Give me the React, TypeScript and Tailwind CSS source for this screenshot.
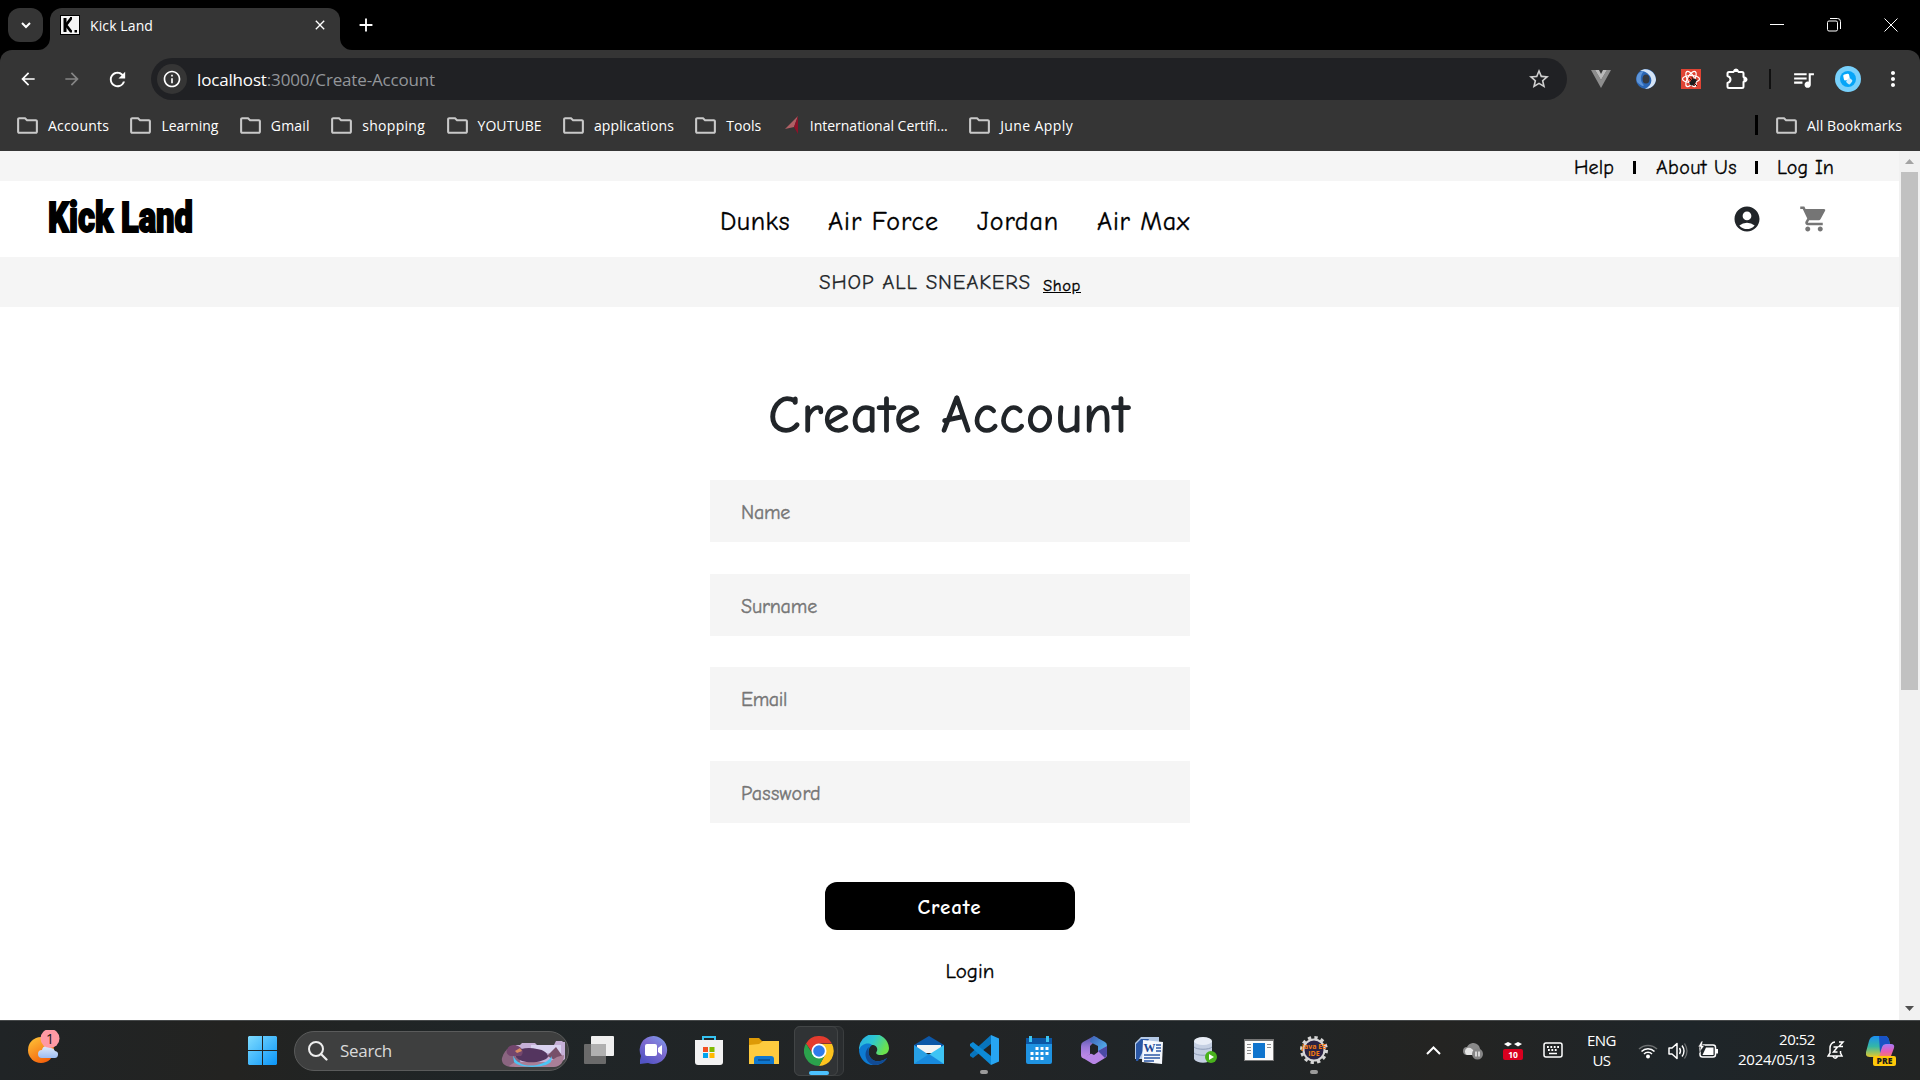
import { useLayoutEffect, useRef, type ReactNode } from "react";
import {
  MdAccountCircle,
  MdArrowBack,
  MdArrowForward,
  MdClose,
  MdAdd,
  MdMoreVert,
  MdOutlineFolder,
  MdOutlineInfo,
  MdQueueMusic,
  MdRefresh,
  MdShoppingCart,
  MdStarBorder,
} from "react-icons/md";

/* Spreads its text over the width set by the class, by tracking or by horizontal scaling. */
function Label({
  className = "",
  scale = false,
  underline = false,
  children,
}: {
  className?: string;
  scale?: boolean;
  underline?: boolean;
  children: ReactNode;
}) {
  const box = useRef<HTMLSpanElement>(null);
  const text = useRef<HTMLSpanElement>(null);
  useLayoutEffect(() => {
    const b = box.current;
    const t = text.current;
    if (!b || !t) return;
    const target = b.clientWidth;
    const natural = t.getBoundingClientRect().width;
    if (scale) {
      t.style.transform = `scaleX(${target / natural})`;
    } else {
      t.style.letterSpacing = `${(target - natural) / (t.textContent?.length || 1)}px`;
    }
  }, [scale]);
  return (
    <span ref={box} className={`block shrink-0 whitespace-nowrap ${className}`}>
      <span ref={text} className={underline ? "inline-block origin-left underline" : "inline-block origin-left"}>
        {children}
      </span>
    </span>
  );
}

function Ico({ className, box, children }: { className: string; box: string; children: ReactNode }) {
  return (
    <svg className={`shrink-0 ${className}`} viewBox={box} fill="none">
      {children}
    </svg>
  );
}

function TabStrip() {
  return (
    <div className="flex h-[50px] items-end bg-black">
      <div className="mb-2 ml-2 flex h-[34px] w-[35px] items-center justify-center rounded-xl bg-[#353535]">
        <Ico className="h-3 w-3" box="0 0 12 12">
          <path d="M2 4l4 4 4-4" stroke="#fff" strokeWidth="2" />
        </Ico>
      </div>
      <svg className="-ml-[5px] h-3 w-3" viewBox="0 0 12 12">
        <path d="M12 0V12H0A12 12 0 0 0 12 0Z" fill="#353535" />
      </svg>
      <div className="flex h-[42px] w-[290px] items-center rounded-t-xl bg-[#353535] pb-2 pl-[10px] pr-3">
        <Ico className="h-5 w-5" box="0 0 20 20">
          <path d="M0 0h20v20H0z" fill="#000" />
          <path d="M1 1h18v18H1z" fill="#f4f4f4" />
          <path d="M5 3v14" stroke="#000" strokeWidth="3" />
          <path d="M11 3.500L6 10L11 16.500" stroke="#000" strokeWidth="2.800" />
          <path d="M14.500 15h2.500v2.500h-2.500zM10 2h2v2h-2zM10 15.500h2v2h-2z" fill="#000" />
        </Ico>
        <Label className="ml-[10px] w-[63px] text-[14px] text-white">Kick Land</Label>
        <MdClose className="ml-auto h-4 w-4 text-white" />
      </div>
      <svg className="h-3 w-3" viewBox="0 0 12 12">
        <path d="M0 0V12H12A12 12 0 0 1 0 0Z" fill="#353535" />
      </svg>
      <MdAdd className="mb-[14px] ml-[3px] h-[22px] w-[22px] text-white" />
      <div className="mb-[18px] ml-auto mr-[22px] flex items-center gap-[43px]">
        <Ico className="h-[14px] w-[14px]" box="0 0 14 14">
          <path d="M0 6.500h14" stroke="#fff" />
        </Ico>
        <Ico className="h-[14px] w-[14px]" box="0 0 14 14">
          <rect x=".5" y="3" width="10" height="10" rx="1.500" stroke="#fff" />
          <path d="M3 .5h7.500a3 3 0 0 1 3 3v7.500" stroke="#fff" />
        </Ico>
        <Ico className="h-[14px] w-[14px]" box="0 0 14 14">
          <path d="M.5.5l13 13M13.500.5l-13 13" stroke="#fff" />
        </Ico>
      </div>
    </div>
  );
}

function Toolbar() {
  return (
    <div className="flex h-[58px] items-center rounded-t-xl bg-[#353535] pl-[18px] pr-[15px]">
      <MdArrowBack className="h-5 w-5 text-white" />
      <MdArrowForward className="ml-6 h-5 w-5 text-[#858585]" />
      <MdRefresh className="ml-6 h-[23px] w-[23px] text-white" />
      <div className="ml-[22px] flex h-[42px] w-[1416px] shrink-0 items-center rounded-full bg-[#202124] pl-[6px] pr-4">
        <div className="flex h-[30px] w-[30px] items-center justify-center rounded-full bg-[#353535]">
          <MdOutlineInfo className="h-5 w-5 text-white" />
        </div>
        <Label className="ml-[10px] mt-px w-[238px] text-[17px] text-[#93969a]">
          <span className="text-white">localhost</span>:3000/Create-Account
        </Label>
        <MdStarBorder className="ml-auto h-6 w-6 text-[#cfcfcf]" />
      </div>
      <Ico className="ml-[24px] h-5 w-5" box="0 0 20 20">
        <path d="M0 1h4l6 10 6-10h4L10 19z" fill="#8d8d8d" />
        <path d="M4 1h4l2 4 2-4h4l-6 10z" fill="#bababa" />
      </Ico>
      <Ico className="ml-[25px] h-5 w-5" box="0 0 20 20">
        <circle cx="10" cy="10" r="10" fill="#2a66b5" />
        <path d="M4 2C12-3 20 4 20 11C19 17 14 20 9 20C15 17 17 12 14 7C11 3 8 2 4 2Z" fill="#d5e4f6" />
        <path d="M1 13C-1 7 3 2 8 2C4 6 4 12 7 15C9 18 6 18 1 13Z" fill="#5d94d8" />
        <ellipse cx="10" cy="10" rx="3.500" ry="4.500" fill="#353a41" />
      </Ico>
      <Ico className="ml-[25px] h-5 w-5" box="0 0 20 20">
        <path d="M0 0h20v20H0z" fill="#e04434" />
        <g stroke="#fff" strokeWidth="1.200">
          <ellipse cx="10" cy="10" rx="8.500" ry="3.500" />
          <ellipse cx="10" cy="10" rx="8.500" ry="3.500" transform="rotate(60 10 10)" />
          <ellipse cx="10" cy="10" rx="8.500" ry="3.500" transform="rotate(120 10 10)" />
        </g>
        <ellipse cx="12" cy="13" rx="2.500" ry="4" fill="#1b1b1b" transform="rotate(40 12 13)" />
        <path d="M8 9l8 8M8 14l8-3M11 8l2 9" stroke="#1b1b1b" />
      </Ico>
      <Ico className="ml-[25px] h-[22px] w-[22px]" box="0 0 22 22">
        <path
          d="M3 4h4.500q1-2.500 2.500-2.500T12.500 4H16q1.500 0 1.500 1.500V9q3 1 3 2.500t-3 2.500v4.500q0 1.500-1.500 1.500H3q-1.500 0-1.500-1.500V15q3-1 3-3.500T1.500 8V5.500Q1.500 4 3 4z"
          stroke="#fff"
          strokeWidth="2"
          strokeLinejoin="round"
        />
        <path d="M7.500 4q1-2.500 2.500-2.500T12.500 4zM17.500 9q3 1 3 2.500t-3 2.500z" fill="#fff" />
      </Ico>
      <div className="ml-[21px] h-5 w-[2px] bg-[#101010]" />
      <MdQueueMusic className="ml-[20px] h-[25px] w-[25px] text-white" />
      <Ico className="ml-[19px] h-[26px] w-[26px]" box="0 0 26 26">
        <circle cx="13" cy="13" r="13" fill="#78d1fc" />
        <circle cx="13" cy="13" r="8" fill="#05a5f8" />
        <rect x="8.500" y="8" width="6" height="6" rx="1.500" fill="#fff" transform="rotate(-12 12 11)" />
        <rect x="12.500" y="12" width="5" height="5.500" rx="1.500" fill="#c9eafc" transform="rotate(40 14 14)" />
      </Ico>
      <MdMoreVert className="ml-5 h-6 w-6 text-white" />
    </div>
  );
}

const bookmarks = [
  { name: "Accounts", cls: "w-[61px]" },
  { name: "Learning", cls: "w-[57px]" },
  { name: "Gmail", cls: "w-[39px]" },
  { name: "shopping", cls: "w-[63px]" },
  { name: "YOUTUBE", cls: "w-[64px]" },
  { name: "applications", cls: "w-[80px]" },
  { name: "Tools", cls: "w-[35px]" },
  { name: "International Certifi...", cls: "w-[138px]" },
  { name: "June Apply", cls: "w-[73px]" },
];

function BookmarksBar() {
  return (
    <div className="flex h-[43px] items-center gap-[19.400px] bg-[#353535] pb-[9px] pl-[15px] pr-[18px] text-[14px] text-white">
      {bookmarks.map((b) => (
        <div key={b.name} className="flex items-center">
          {b.name.startsWith("Inter") ? (
            <Ico className="mr-1 h-5 w-[25px]" box="0 0 25 20">
              <path d="M17 1L4 14l9-2z" fill="#b06065" />
              <path d="M17 1v18l-4-7z" fill="#8e1128" />
            </Ico>
          ) : (
            <MdOutlineFolder className="mr-2 h-[25px] w-[25px] text-[#c9c9c9]" />
          )}
          <Label className={b.cls}>{b.name}</Label>
        </div>
      ))}
      <div className="ml-auto h-5 w-[3px] bg-black" />
      <div className="-ml-[3px] flex items-center">
        <MdOutlineFolder className="mr-2 h-[25px] w-[25px] text-[#c9c9c9]" />
        <Label className="w-[95px]">All Bookmarks</Label>
      </div>
    </div>
  );
}

function ShopHeader() {
  return (
    <header>
      <div className="flex h-[30px] items-center justify-end bg-[#f5f5f5] pr-[65px] pt-[3px] text-[20px] text-black [-webkit-text-stroke:0.3px_#000]">
        <Label className="w-[40px]">Help</Label>
        <div className="ml-[19px] h-[13px] w-[3px] bg-black" />
        <Label className="ml-[20px] w-[81px]">About Us</Label>
        <div className="ml-[18px] h-[13px] w-[3px] bg-black" />
        <Label className="ml-[19px] w-[57px]">Log In</Label>
      </div>
      <div className="grid h-[76px] grid-cols-[720px_1fr_165px] items-center text-black">
        <Label
          scale
          className="ml-[48px] w-[145px] pb-[3px] font-['Impact','Roboto',sans-serif] text-[42px] leading-none font-black [-webkit-text-stroke:1.800px_#000]"
        >
          Kick Land
        </Label>
        <nav className="flex pt-[7px] text-[26px] [-webkit-text-stroke:0.350px_#000]">
          <Label className="w-[70px]">Dunks</Label>
          <Label className="ml-[38px] w-[111px]">Air Force</Label>
          <Label className="ml-[38px] w-[82px]">Jordan</Label>
          <Label className="ml-[38px] w-[93px]">Air Max</Label>
        </nav>
        <div className="flex gap-[37px]">
          <MdAccountCircle className="-ml-[2px] h-[30px] w-[30px] text-[#212529]" />
          <MdShoppingCart className="h-[30px] w-[30px] text-[#757575]" />
        </div>
      </div>
      <div className="flex h-[50px] items-center bg-[#f5f5f5] pl-[819px] text-[#212529]">
        <Label className="mt-[2px] w-[212px] text-[21px] [-webkit-text-stroke:0.250px_#212529]">SHOP ALL SNEAKERS</Label>
        <a className="ml-[12px] mt-[8px] text-[16.500px] text-black [-webkit-text-stroke:0.350px_#000]">
          <Label underline className="w-[38px]">
            Shop
          </Label>
        </a>
      </div>
    </header>
  );
}

const fields = [
  { name: "Name", cls: "w-[49px]" },
  { name: "Surname", cls: "w-[76px]" },
  { name: "Email", cls: "w-[46px]" },
  { name: "Password", cls: "w-[80px]" },
];

function AccountForm() {
  return (
    <form className="flex flex-col items-center">
      <h1 className="mt-[73px] h-[100px] text-[52px] leading-[70px] font-medium text-[#212529] [-webkit-text-stroke:1.500px_#212529]">
        <Label className="w-[362px]">Create Account</Label>
      </h1>
      <div className="flex flex-col gap-[31.250px]">
        {fields.map((f) => (
          <div
            key={f.name}
            className="flex h-[62.400px] w-[480px] items-center bg-[#f5f5f5] pl-[31.500px] pt-[4px] text-[20px] text-[#757575] [-webkit-text-stroke:0.400px_#757575]"
          >
            <Label className={f.cls}>{f.name}</Label>
          </div>
        ))}
      </div>
      <div className="mt-[58.650px] flex h-[48px] w-[250px] items-center justify-center rounded-xl bg-black pt-[3px] text-[21px] font-semibold text-white">
        <Label className="w-[64px]">Create</Label>
      </div>
      <a className="mt-[26px] ml-[41px] text-[21px] text-black [-webkit-text-stroke:0.300px_#000]">
        <Label className="w-[49px]">Login</Label>
      </a>
    </form>
  );
}

function Scrollbar() {
  return (
    <div className="flex w-[21px] flex-col items-center bg-[#f1f1f1]">
      <Ico className="my-[8px] h-[5px] w-[9px]" box="0 0 9 5">
        <path d="M4.500 0L9 5H0z" fill="#a3a3a3" />
      </Ico>
      <div className="h-[518px] w-[17px] bg-[#c1c1c1]" />
      <Ico className="mt-auto mb-[9px] h-[5px] w-[9px]" box="0 0 9 5">
        <path d="M0 0h9L4.500 5z" fill="#505050" />
      </Ico>
    </div>
  );
}

function WeatherIcon() {
  return (
    <Ico className="ml-[27px] h-[42px] w-[36px]" box="0 0 36 42">
      <defs>
        <linearGradient id="sun" x1="0" y1="0" x2=".6" y2="1">
          <stop stopColor="#ffc83a" />
          <stop offset="1" stopColor="#f4620c" />
        </linearGradient>
        <linearGradient id="cloud" x1="0" y1="0" x2="0" y2="1">
          <stop stopColor="#e2ecfb" />
          <stop offset="1" stopColor="#9dbdf2" />
        </linearGradient>
      </defs>
      <circle cx="14" cy="20" r="13" fill="url(#sun)" />
      <path d="M15 28a4 4 0 0 1 0-8a5 5 0 0 1 9-2a4.500 4.500 0 0 1 4 3a3.500 3.500 0 0 1-1 7z" fill="url(#cloud)" />
      <circle cx="23" cy="8.500" r="9.500" fill="#ff99a4" />
      <text x="23" y="13.500" textAnchor="middle" fontSize="14" fill="#161616">
        1
      </text>
    </Ico>
  );
}

function StartIcon() {
  return (
    <Ico className="h-[29px] w-[29px]" box="0 0 29 29">
      <defs>
        <linearGradient id="win" x1="0" y1="0" x2="29" y2="29" gradientUnits="userSpaceOnUse">
          <stop stopColor="#7fdcff" />
          <stop offset="1" stopColor="#0a95f8" />
        </linearGradient>
      </defs>
      <path d="M1 0h13v14H0V1zM15 0h13l1 1v13H15zM0 15h14v14H1l-1-1zM15 15h14v13l-1 1H15z" fill="url(#win)" />
    </Ico>
  );
}

function SearchBox() {
  return (
    <div className="ml-[17px] flex h-10 w-[275px] shrink-0 items-center rounded-full border border-[#5a5b5b] bg-[#3e3f3f] pl-[13px] pr-[3px]">
      <Ico className="h-5 w-5" box="0 0 20 20">
        <circle cx="8" cy="8" r="7" stroke="#eee" strokeWidth="2" />
        <path d="M13 13l5.500 5.500" stroke="#eee" strokeWidth="2.200" strokeLinecap="round" />
      </Ico>
      <Label className="ml-3 w-[52px] text-[17px] text-[#dadada]">Search</Label>
      <Ico className="ml-auto mt-[6px] h-[28px] w-[64px]" box="0 0 64 28">
        <path d="M15 5h4l2-2h13l2 2h17l2-4h6l1 1h2v17l-9 7H16L5 20z" fill="#c5afd6" />
        <path d="M30 5h30v8H30z" fill="#d9d2ef" />
        <path d="M1 18c2-8 8-12 14-11l5 17-8 3C5 27 0 24 1 18z" fill="#8a6580" />
        <path d="M46 16l9-9 7 10-4 5z" fill="#775069" />
        <path d="M8 26l6-4h34l8-5 7-2c0 7-4 12-10 12H14z" fill="#a97f97" />
        <path d="M12 15c3 9 13 12 24 10c7-2 12-4 15-9l-1 6c-6 6-30 7-37 0z" fill="#4bc5f5" />
        <path d="M15 12c4-4 13-5 21-3c7 1 11 4 11 8c-4 6-26 8-32 0z" fill="#54355f" />
        <path d="M6 10c1-5 7-6 11-4c5 2 6 7 3 10H9c-3-2-4-3-3-6z" fill="#73466d" />
        <path d="M14 11l5-3 2 3-5 2z" fill="#d98c62" />
      </Ico>
    </div>
  );
}

function ChromeIcon() {
  return (
    <Ico className="h-[30px] w-[30px]" box="0 0 30 30">
      <path d="M15 8h13A15 15 0 0 1 15 30l6-11z" fill="#fcc31e" />
      <path d="M2 7.500A15 15 0 0 1 28 7.500H15l-6 10z" fill="#e33b2e" />
      <path d="M2 7.500L9 18.500l12 .5-6 11A15 15 0 0 1 2 7.500z" fill="#2ba24c" />
      <circle cx="15" cy="15" r="7.500" fill="#fff" />
      <circle cx="15" cy="15" r="5.800" fill="#2f7bea" />
    </Ico>
  );
}

const apps: { id: string; running?: boolean; icon: ReactNode }[] = [
  {
    id: "taskview",
    icon: (
      <Ico className="h-7 w-[30px]" box="0 0 30 28">
        <rect x="7" width="23" height="20" rx="1" fill="#efefef" />
        <rect y="8" width="22" height="20" rx="1" fill="#6a6a6a" />
        <path d="M7 8h15v12H7z" fill="#b0b0b0" />
      </Ico>
    ),
  },
  {
    id: "chat",
    icon: (
      <Ico className="h-[29px] w-[29px]" box="0 0 29 29">
        <defs>
          <linearGradient id="chat" x1="1" y1="0" x2=".3" y2="1">
            <stop stopColor="#7da0ee" />
            <stop offset=".5" stopColor="#7e6bd0" />
            <stop offset="1" stopColor="#5254c4" />
          </linearGradient>
        </defs>
        <path d="M15 0a14 14 0 1 1-6 27L1 28V24l1-4A14 14 0 0 1 15 0z" fill="url(#chat)" />
        <rect x="6" y="8" width="12" height="12" rx="2" fill="#fff" />
        <path d="M19 12l4-3v10l-4-3z" fill="#fff" />
      </Ico>
    ),
  },
  {
    id: "store",
    icon: (
      <Ico className="h-[30px] w-[30px]" box="0 0 30 30">
        <path d="M9 6V2h12v4" stroke="#35c3f2" strokeWidth="2" />
        <path d="M1 5h28v22a3 3 0 0 1-3 3H4a3 3 0 0 1-3-3z" fill="#f2f2f2" />
        <path d="M9 12h5v5H9z" fill="#f25022" />
        <path d="M15.500 12h5v5h-5z" fill="#7fba00" />
        <path d="M9 18h5v5H9z" fill="#00a4ef" />
        <path d="M15.500 18h5v5h-5z" fill="#ffb900" />
      </Ico>
    ),
  },
  {
    id: "explorer",
    icon: (
      <Ico className="h-[27px] w-[30px]" box="0 0 30 27">
        <path d="M0 1h10l3 3h4v6H0z" fill="#dd9a06" />
        <path d="M0 8l10-1 4-3h16v23H0z" fill="#fecb3e" />
        <path d="M5 27v-5a3 3 0 0 1 3-3h14a3 3 0 0 1 3 3v5z" fill="#0f77cf" />
        <path d="M9 23h12" stroke="#084b8c" strokeWidth="1.500" />
      </Ico>
    ),
  },
  { id: "chrome", icon: <ChromeIcon /> },
  {
    id: "edge",
    icon: (
      <Ico className="h-[30px] w-[30px]" box="0 0 30 30">
        <defs>
          <linearGradient id="edge" x1="0" y1="0" x2="1" y2=".4">
            <stop stopColor="#29a8e8" />
            <stop offset=".5" stopColor="#2cc7d2" />
            <stop offset="1" stopColor="#6be14d" />
          </linearGradient>
        </defs>
        <path d="M0 15A15 15 0 0 1 30 13c0 5-4 7-8 7c-4 0-6-1-4-4c1-3-1-6-5-6C7 10 2 12 0 15z" fill="url(#edge)" />
        <path d="M0 15c2-6 9-8 13-5c-3 2-5 7-2 12c3 5 10 6 17 1C23 32 9 33 3 24C1 21 0 18 0 15z" fill="#0d7bd2" />
        <path d="M10 12c-6 5-4 15 4 18c6 1 12-3 14-7c-7 5-14 4-17-1c-2-3-2-7-1-10z" fill="#114b95" />
      </Ico>
    ),
  },
  {
    id: "mail",
    icon: (
      <Ico className="h-7 w-[30px]" box="0 0 30 28">
        <path d="M0 9L15 0l15 9v4H0z" fill="#0c57a7" />
        <path d="M3 9h24v8H3z" fill="#f3f3f3" />
        <path d="M0 9l15 10L0 28z" fill="#27a0e5" />
        <path d="M30 9L0 28h30z" fill="#3ec4f4" />
        <path d="M0 28l15-10 15 10z" fill="#188ade" />
      </Ico>
    ),
  },
  {
    id: "code",
    running: true,
    icon: (
      <Ico className="h-[30px] w-[30px]" box="0 0 30 30">
        <path d="M22 0L1 19v2l3 2L22 9z" fill="#0874bd" />
        <path d="M22 30L1 11V9l3-2 18 14z" fill="#0d8ad6" />
        <path d="M22 0l8 3.500v23L22 30z" fill="#27a5f2" />
      </Ico>
    ),
  },
  {
    id: "calendar",
    icon: (
      <Ico className="h-7 w-[26px]" box="0 0 26 28">
        <rect y="2" width="26" height="26" rx="2" fill="#1f93e2" />
        <path d="M0 2h26v6H0z" fill="#0b57a5" />
        <path d="M3 0h3v6H3zM20 0h3v6h-3z" fill="#3cc5f2" />
        <path d="M9.500 11h3v3h-3zM14.500 11h3v3h-3zM19.500 11h3v3h-3zM4.500 16h3v3h-3zM9.500 16h3v3h-3zM14.500 16h3v3h-3zM19.500 16h3v3h-3zM4.500 21h3v3h-3zM9.500 21h3v3h-3zM14.500 21h3v3h-3z" fill="#fff" />
      </Ico>
    ),
  },
  {
    id: "m365",
    icon: (
      <Ico className="h-7 w-[26px]" box="0 0 26 28">
        <defs>
          <linearGradient id="m365a" x1="0" y1="0" x2="0" y2="1">
            <stop stopColor="#5256a8" />
            <stop offset=".5" stopColor="#9a79d8" />
            <stop offset="1" stopColor="#c58bea" />
          </linearGradient>
          <linearGradient id="m365b" x1="0" y1="0" x2="1" y2="1">
            <stop stopColor="#3f5fb5" />
            <stop offset="1" stopColor="#57c5fb" />
          </linearGradient>
        </defs>
        <path d="M13 0L2 6Q0 7 0 10v9q0 3 3 3.500L9 18V10l8-8z" fill="url(#m365a)" />
        <path d="M13 0l11 6q2 1 2 4v10l-9-5v-5l-8-4q0-4 4-6z" fill="url(#m365b)" />
        <path d="M2 22l7-4 8-3 9-5v8q0 3-2 4l-9 5.500q-2 1-4 0z" fill="#b886e6" />
        <path d="M17 15l9-5v8q0 2-2 4z" fill="#4b4aa5" />
        <path d="M9 12l4-3 4 2v5l-4 3-4-2z" fill="#212325" />
      </Ico>
    ),
  },
  {
    id: "word",
    icon: (
      <Ico className="h-[29px] w-[30px]" box="0 0 30 29">
        <path d="M7 1h18v22H1V7z" fill="#b4c9e6" />
        <path d="M2 8l5-5h8L4 25H2z" fill="#2a57a5" />
        <path d="M9 4l20 2-1 22-20-2z" fill="#f5f8fd" />
        <text x="9.500" y="16" fontSize="12" fontWeight="700" fontFamily="Liberation Serif, serif" fill="#1d4692">
          W
        </text>
        <path d="M22 9h5M22 12h5M22 15h5M10 19h16M10 22h16M10 25h10" stroke="#2b57a5" strokeWidth="1.500" />
      </Ico>
    ),
  },
  {
    id: "database",
    icon: (
      <Ico className="ml-[3px] h-7 w-6" box="0 0 24 28">
        <path d="M1 5v18c3 5 15 5 18 0V5z" fill="#c4cfe2" />
        <path d="M1 11c3 3 15 3 18 0M1 17c3 3 15 3 18 0" stroke="#8e9db8" />
        <ellipse cx="10" cy="5" rx="9" ry="4" fill="#e8edf6" />
        <circle cx="18" cy="21" r="6" fill="#49b21d" />
        <path d="M16 18l5 3-5 3z" fill="#fff" />
      </Ico>
    ),
  },
  {
    id: "window",
    icon: (
      <Ico className="h-[22px] w-[30px]" box="0 0 30 22">
        <path d="M0 0h30v22H0z" fill="#777" />
        <path d="M1 2h28v19H1z" fill="#fafafa" />
        <path d="M9 4h12v15H9z" fill="#0f74cd" />
        <path d="M3 5.500h4M3 8.500h4M3 11.500h4M3 14.500h4M23 5.500h4M23 8.500h4" stroke="#8b8b8b" />
      </Ico>
    ),
  },
  {
    id: "eclipse",
    running: true,
    icon: (
      <Ico className="h-[30px] w-[30px]" box="0 0 30 30">
        <circle cx="15" cy="15" r="12.500" stroke="#d6d6d6" strokeWidth="3" strokeDasharray="3.300 3.245" />
        <circle cx="15" cy="15" r="10.500" fill="#2b2344" stroke="#d6d6d6" strokeWidth="2" />
        <text x="15" y="14" textAnchor="middle" fontSize="7" fontWeight="700" fill="#f47b12">
          Java EE
        </text>
        <text x="15" y="20.500" textAnchor="middle" fontSize="7" fontWeight="700" fill="#f47b12">
          IDE
        </text>
      </Ico>
    ),
  },
];

function Tray() {
  return (
    <div className="ml-[72px] flex h-full items-center text-[15px] leading-5 text-white">
      <div className="flex w-10 justify-center">
        <Ico className="h-[9px] w-[15px]" box="0 0 15 9">
          <path d="M1 8l6.500-6.500L14 8" stroke="#fff" strokeWidth="2" />
        </Ico>
      </div>
      <div className="flex w-10 justify-center">
        <Ico className="h-[18px] w-[20px]" box="0 0 20 18">
          <path d="M4 13a4 4 0 0 1 0-8a7 7 0 0 1 12-1l3 8z" fill="#8a8a8a" />
          <path d="M4 13a4 4 0 0 1 0-7q3-1 5 1l6 6z" fill="#e4e4e4" />
          <circle cx="14.500" cy="12" r="5.500" fill="#858585" />
          <path d="M13 9.500v5M16 9.500v5" stroke="#fff" strokeWidth="1.300" />
        </Ico>
      </div>
      <div className="flex w-10 justify-center">
        <Ico className="h-[19px] w-[20px]" box="0 0 20 19">
          <path d="M1 3l4-2 4 2-4 2.500zM11 3l4-2 4 2-4 2.500z" fill="#fff" />
          <rect y="8" width="20" height="11" rx="2" fill="#d9001f" />
          <text x="10" y="16.500" textAnchor="middle" fontSize="8.500" fontWeight="700" fill="#fff">
            10
          </text>
        </Ico>
      </div>
      <div className="flex w-10 justify-center pb-[2px]">
        <Ico className="h-4 w-5" box="0 0 20 16">
          <rect x="1" y="1" width="18" height="14" rx="2" stroke="#fff" strokeWidth="1.500" />
          <path d="M4 5h12M5 8h10" stroke="#fff" strokeWidth="1.800" strokeDasharray="1.800 1.600" />
          <path d="M6 11.500h8" stroke="#fff" strokeWidth="1.500" />
        </Ico>
      </div>
      <div className="flex w-[57px] flex-col items-center pb-[2px]">
        <Label className="w-[29px]">ENG</Label>
        <Label className="w-[18px]">US</Label>
      </div>
      <div className="flex w-9 justify-center">
        <Ico className="h-4 w-5" box="0 0 20 16">
          <path d="M1 6a13 13 0 0 1 18 0" stroke="#6c6f70" strokeWidth="1.500" />
          <path d="M3.500 8.500a9 9 0 0 1 13 0M6 11a5.500 5.500 0 0 1 8 0" stroke="#fff" strokeWidth="1.500" />
          <circle cx="10" cy="13.500" r="2" fill="#fff" />
        </Ico>
      </div>
      <div className="flex w-6 justify-center">
        <Ico className="h-[18px] w-5" box="0 0 20 18">
          <path d="M1 6h3l5-4.500v15L4 12H1z" stroke="#fff" strokeWidth="1.500" strokeLinejoin="round" />
          <path d="M11.500 6q2 3 0 6M14 3.500q4 5.500 0 11" stroke="#fff" strokeWidth="1.400" />
          <path d="M16.500 1.500q5 7.500 0 15" stroke="#6c6f70" strokeWidth="1.300" />
        </Ico>
      </div>
      <div className="flex w-9 justify-center pb-[2px]">
        <Ico className="h-[18px] w-5" box="0 0 20 18">
          <rect x="2" y="4" width="15.500" height="12" rx="2.500" stroke="#fff" strokeWidth="1.500" />
          <path d="M8 6.500h7.500v7.500H4.500z" fill="#fff" />
          <path d="M18 8h2v4.500h-2z" fill="#fff" />
          <path d="M3.500 0L0 6h2.500l-1 5.500 5-7H4l1-4.500z" fill="#fff" stroke="#202426" strokeWidth=".6" />
        </Ico>
      </div>
      <div className="flex w-[89px] flex-col items-end pb-[4px]">
        <Label className="w-[36px]">20:52</Label>
        <Label className="w-[77px]">2024/05/13</Label>
      </div>
      <div className="flex w-[42px] justify-center pb-[2px]">
        <Ico className="h-5 w-[18px]" box="0 0 18 20">
          <path d="M8 2C5 2 3 5 3 8v5l-2 3h14l-1.500-3v-2M6 16.500q2 3.500 4.500 0" stroke="#fff" strokeWidth="1.500" />
          <path d="M6.500 7h4l-4 5h4M12 2h4l-4 4.500h4" stroke="#fff" strokeWidth="1.500" />
        </Ico>
      </div>
      <div className="flex w-12 justify-center">
        <Ico className="h-[30px] w-[30px]" box="0 0 30 30">
          <defs>
            <linearGradient id="cpl" x1="0" y1="0" x2="0" y2="1">
              <stop stopColor="#1b8ff2" />
              <stop offset=".5" stopColor="#35b7a5" />
              <stop offset="1" stopColor="#e5c92b" />
            </linearGradient>
            <linearGradient id="cpr" x1="0" y1="0" x2="0" y2="1">
              <stop stopColor="#a67bf6" />
              <stop offset=".5" stopColor="#e85bb4" />
              <stop offset="1" stopColor="#fb8c46" />
            </linearGradient>
          </defs>
          <path d="M15 8h10q4 0 3 4l-3 8q-1 3-4 3h-9z" fill="url(#cpr)" />
          <path d="M8 0h11q3 0 4 4l1 4h-4q-3 0-4 3l-2 7q-1 3-4 3H4q-5 0-4-5L3 5q1-4 5-5z" fill="url(#cpl)" />
          <path d="M13 0h6q3 0 4 4l1 4h-4q-3 0-4 3l-2 6z" fill="#1852c5" />
          <rect x="7" y="20" width="23" height="10" rx="2" fill="#ffc809" />
          <text x="18.500" y="28" textAnchor="middle" fontSize="8.500" fontWeight="800" fill="#1b1b1b">
            PRE
          </text>
        </Ico>
      </div>
    </div>
  );
}

function Taskbar() {
  return (
    <footer className="flex h-[60px] items-center border-t border-[#46494a] bg-[linear-gradient(90deg,#202426,#232321_12%,#1f2527_25%,#222425_50%,#1f2528_62%,#242422_75%,#1e2529_88%,#222423)]">
      <WeatherIcon />
      <div className="ml-[185px] shrink-0">
        <StartIcon />
      </div>
      <SearchBox />
      <div className="ml-[2px] flex h-full">
        {apps.map((a) =>
          a.id === "chrome" ? (
            <div key={a.id} className="flex w-[55px] items-center pl-[3px]">
              <div className="flex h-[50px] w-[50px] rounded-md border border-[#3a3d3e] bg-[#2a2d2f]">
                <div className="-my-px -ml-px flex h-[50px] w-[44px] flex-col items-center rounded-md border border-[#424546] bg-[#303335] pt-[9px] pl-[6px]">
                  {a.icon}
                  <div className="mt-[5px] h-1 w-5 shrink-0 rounded-full bg-[#4cc2ff]" />
                </div>
              </div>
            </div>
          ) : (
            <div key={a.id} className="flex w-[55px] flex-col items-center">
              <div className="flex h-[58px] items-center">{a.icon}</div>
              {a.running && <div className="-mt-[9px] h-1 w-2 shrink-0 rounded-full bg-[#9b9b9b]" />}
            </div>
          ),
        )}
      </div>
      <Tray />
    </footer>
  );
}

export default function App() {
  return (
    <div className="flex h-[1080px] w-[1920px] flex-col overflow-hidden bg-white font-['Segoe_UI','Open_Sans','Noto_Sans',sans-serif]">
      <TabStrip />
      <div className="bg-black">
        <Toolbar />
        <BookmarksBar />
      </div>
      <div className="flex min-h-0 flex-1">
        <main className="w-[1899px] bg-white font-['Comic_Sans_MS','Comic_Neue','Noto_Sans',sans-serif]">
          <ShopHeader />
          <AccountForm />
        </main>
        <Scrollbar />
      </div>
      <Taskbar />
    </div>
  );
}
